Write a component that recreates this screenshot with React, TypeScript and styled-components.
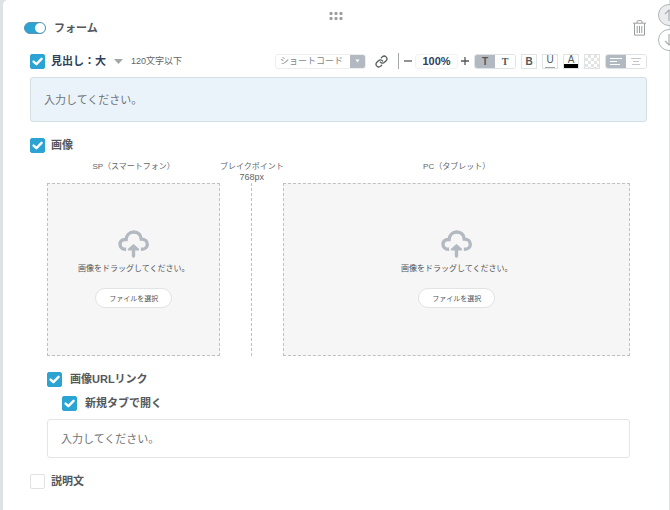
import React, { useId, useState } from "react";
import styled, { createGlobalStyle } from "styled-components";

const BLUE = "#2ba4d3";
const NAVY = "#2f405a";
const TEXT = "#555759";
const SOFT = "#626567";
const LINE = "#dfe3e5";
const GREY = "#b3b9c0";

const GlobalStyle = createGlobalStyle`
  *, *::before, *::after { box-sizing: border-box; }
  body { margin: 0; background: #dde2e4; }
  body, button, input, select {
    font-family: "Liberation Sans", "Noto Sans CJK JP", sans-serif;
    color: ${TEXT};
  }
  button, select { cursor: pointer; }
`;

const Page = styled.div`
  overflow-x: clip;
  padding: 0 1px 0 3px;
`;

const Card = styled.main`
  position: relative;
  min-height: 100vh;
  padding: 12px 22px 20px 21px;
  background: #fff;
  border-radius: 5px 0 0 0;
`;

const DragHandle = styled.button`
  display: block;
  margin: 0 auto;
  padding: 0;
  border: 0;
  background: none;
  cursor: grab;
  svg { display: block; }
`;

const Header = styled.header`
  display: flex;
  align-items: center;
  justify-content: space-between;
  height: 16px;
`;

const SwitchLabel = styled.label`
  display: flex;
  align-items: center;
  gap: 8px;
  font-size: 11px;
  line-height: 16px;
  font-weight: 600;
`;

const Switch = styled.input`
  appearance: none;
  display: flex;
  align-items: center;
  width: 22px;
  height: 12px;
  margin: 0;
  border: 1px solid #5b93ab;
  border-radius: 6px;
  background: #c6cbce;
  &::before {
    content: "";
    width: 10px;
    height: 10px;
    border-radius: 50%;
    background: #fff;
  }
  &:checked { justify-content: flex-end; background: ${BLUE}; }
`;

const IconButton = styled.button`
  display: grid;
  place-items: center;
  padding: 0;
  border: 0;
  background: none;
  svg { display: block; }
`;

const MoveButtons = styled.div`
  position: absolute;
  top: 4px;
  right: -11px;
  display: grid;
  gap: 3px;
`;

const MoveButton = styled(IconButton)<{ $filled?: boolean }>`
  width: 22px;
  height: 22px;
  border: 1px solid #b2b6b9;
  border-radius: 50%;
  background: ${(p) => (p.$filled ? "#ebecee" : "#fff")};
`;

const Section = styled.section<{ $top: number }>`
  margin-top: ${(p) => p.$top}px;
  padding-left: 6px;
`;

const HeadingRow = styled.div`
  display: flex;
  align-items: center;
  height: 16px;
`;

const Box = styled.span`
  display: grid;
  width: 15px;
  height: 15px;
  flex: none;
  svg { grid-area: 1 / 1; pointer-events: none; }
`;

const BoxInput = styled.input`
  appearance: none;
  grid-area: 1 / 1;
  width: 15px;
  height: 15px;
  margin: 0;
  border: 1px solid ${LINE};
  border-radius: 2px;
  background: #fff;
  &:checked { border-color: ${BLUE}; background: ${BLUE}; }
`;

const CheckLabel = styled.label<{ $gap: number }>`
  display: flex;
  width: fit-content;
  align-items: center;
  gap: ${(p) => p.$gap}px;
  font-size: 11px;
  line-height: 15px;
  font-weight: 600;
`;

const LevelPicker = styled.span`
  display: flex;
  align-items: center;
  margin-left: 6px;
`;

const LevelSelect = styled.select`
  appearance: none;
  margin-right: -9px;
  padding: 0 17px 0 0;
  border: 0;
  background: none;
  color: ${NAVY};
  font-size: 11px;
  line-height: 16px;
  font-weight: 600;
`;

const Caret = styled.svg`
  flex: none;
  pointer-events: none;
`;

const Hint = styled.span`
  margin-left: 8px;
  color: ${SOFT};
  font-size: 9px;
  line-height: 16px;
  white-space: nowrap;
`;

const Toolbar = styled.div`
  display: flex;
  align-items: center;
  gap: 5px;
  margin-left: auto;
`;

const CodePicker = styled.span`
  display: flex;
  align-items: center;
  height: 15px;
  border: 1px solid #eceeef;
  border-radius: 3px;
  overflow: hidden;
`;

const CodeSelect = styled.select`
  appearance: none;
  width: 89px;
  height: 15px;
  margin-right: -15px;
  padding: 0 15px 0 4px;
  border: 0;
  background: none;
  color: #84888c;
  font-size: 9px;
  line-height: 13px;
`;

const CodeArrow = styled.span`
  display: grid;
  place-items: center;
  width: 15px;
  height: 15px;
  background: ${GREY};
  pointer-events: none;
`;

const LinkButton = styled(IconButton)`
  margin: 0 5px 0 4px;
`;

const Divider = styled.span`
  width: 1px;
  height: 16px;
  background: #a4a7aa;
`;

const Zoom = styled.div`
  display: flex;
  align-items: center;
  gap: 3px;
`;

const ZoomInput = styled.input`
  width: 43px;
  height: 15px;
  padding: 0;
  border: 1px solid #f1f2f3;
  border-radius: 3px;
  color: ${NAVY};
  font-size: 11px;
  font-weight: 600;
  text-align: center;
`;

const Segments = styled.div`
  display: flex;
  height: 15px;
  border: 1px solid ${LINE};
  border-radius: 3px;
  overflow: hidden;
`;

const Segment = styled(IconButton)<{ $on?: boolean; $serif?: boolean }>`
  width: 20px;
  background: ${(p) => (p.$on ? GREY : "#fff")};
  font-size: 10px;
  line-height: 13px;
  font-weight: 600;
  font-family: ${(p) => (p.$serif ? '"Liberation Serif", serif' : '"Liberation Sans", sans-serif')};
`;

const Tool = styled(IconButton)`
  width: 16px;
  height: 15px;
  border: 1px solid ${LINE};
  font-size: 10px;
  line-height: 13px;
  font-weight: 600;
`;

const BarTool = styled(Tool)<{ $bar: string; $thick: number }>`
  align-content: space-between;
  font-weight: 400;
  line-height: 9px;
  &::after {
    content: "";
    width: ${(p) => (p.$thick > 1 ? 14 : 10)}px;
    height: ${(p) => p.$thick}px;
    background: ${(p) => p.$bar};
  }
`;

const TextField = styled.input<{ $tinted?: boolean }>`
  display: block;
  width: 100%;
  height: ${(p) => (p.$tinted ? 45 : 39)}px;
  margin-top: 8px;
  padding: 0 13px;
  border: 1px solid ${(p) => (p.$tinted ? "#d3dfe3" : "#e3e5e6")};
  border-radius: 3px;
  background: ${(p) => (p.$tinted ? "#eaf3fa" : "#fff")};
  font-size: 11px;
  &::placeholder { color: #6f7478; opacity: 1; }
`;

const ImageBody = styled.div`
  padding: 8px 17px 0;
`;

const Columns = styled.div`
  display: grid;
  grid-template-columns: 1fr 63px 2fr;
  grid-template-rows: 22px 173px;
  justify-items: center;
`;

const ColumnTitle = styled.div`
  color: ${SOFT};
  font-size: 8px;
  line-height: 11px;
  text-align: center;
  white-space: nowrap;
`;

const Width = styled.div`
  font-size: 9px;
`;

const DropZone = styled.div`
  display: flex;
  flex-direction: column;
  align-items: center;
  justify-self: stretch;
  padding-top: 46px;
  border: 1px dashed #bfc1c3;
  background: #f6f6f6;
`;

const BreakLine = styled.div`
  border-left: 1px dashed #bfc1c3;
`;

const DropText = styled.p`
  margin: 5px 0 13px;
  font-size: 8px;
  line-height: 12px;
`;

const FileButton = styled.button`
  width: 77px;
  height: 20px;
  padding: 0;
  border: 1px solid #e1e3e4;
  border-radius: 10px;
  background: #fff;
  font-size: 7px;
`;

const LinkOptions = styled.div`
  display: grid;
  gap: 9px;
  margin-top: 16px;
`;

const Indent = styled.div`
  padding-left: 15px;
`;

function CheckBox({ id, label, on }: { id?: string; label?: string; on?: boolean }) {
  const [checked, setChecked] = useState(Boolean(on));
  return (
    <Box>
      <BoxInput
        type="checkbox"
        id={id}
        aria-label={label}
        checked={checked}
        onChange={(e) => setChecked(e.target.checked)}
      />
      {checked && (
        <svg width="15" height="15" viewBox="0 0 15 15" fill="none" stroke="#fff" strokeWidth="2.4" strokeLinecap="round" strokeLinejoin="round">
          <path d="M3.6 7.6 6.4 10.2 11.6 4.8" />
        </svg>
      )}
    </Box>
  );
}

function CheckRow({ text, on, gap = 8 }: { text: string; on?: boolean; gap?: number }) {
  const id = useId();
  return (
    <CheckLabel htmlFor={id} $gap={gap}>
      <CheckBox id={id} on={on} />
      {text}
    </CheckLabel>
  );
}

function UploadArea() {
  return (
    <DropZone>
      <svg width="31" height="28" viewBox="0 0 92 83" fill="none" stroke={GREY} strokeWidth="10">
        <path d="M24 57h-2C12 57 6 50 6 42s6-14 15-14h3C25 15 34 6 47 6s21 9 22 21c11 0 18 6 18 15s-7 15-16 15h-3" />
        <path d="M46 52v25" strokeLinecap="round" />
        <path d="M46 45 32 58h28z" fill={GREY} strokeWidth="6" strokeLinejoin="round" />
      </svg>
      <DropText>画像をドラッグしてください。</DropText>
      <FileButton type="button">ファイルを選択</FileButton>
    </DropZone>
  );
}

function Arrow({ down }: { down?: boolean }) {
  return (
    <svg width="12" height="14" viewBox="0 0 12 14" fill="none" stroke="#a9adb0" strokeWidth="1.2">
      <path d={down ? "M6 1v11M2 8l4 4 4-4" : "M6 13V2M2 6l4-4 4 4"} />
    </svg>
  );
}

export default function App() {
  return (
    <>
      <GlobalStyle />
      <Page>
        <Card>
          <DragHandle type="button" aria-label="並べ替え">
            <svg width="14" height="8" viewBox="0 0 14 8" fill="#9b9b9b">
              {[0, 5, 10].map((x) =>
                [0, 5].map((y) => <rect key={`${x}-${y}`} x={x + 0.5} y={y} width="3" height="3" rx="1" />)
              )}
            </svg>
          </DragHandle>
          <MoveButtons>
            <MoveButton type="button" aria-label="上へ移動" $filled><Arrow /></MoveButton>
            <MoveButton type="button" aria-label="下へ移動"><Arrow down /></MoveButton>
          </MoveButtons>

          <Header>
            <SwitchLabel>
              <Switch type="checkbox" role="switch" defaultChecked />
              フォーム
            </SwitchLabel>
            <IconButton type="button" aria-label="削除">
              <svg width="15" height="16" viewBox="0 0 15 16" fill="none" stroke="#9a9da0">
                <path d="M1 3.2h13M5 3V1.8Q5 .6 6.2.6h2.6Q10 .6 10 1.8V3M2.5 3.5v11.6h10V3.5M5.2 6v7M7.5 6v7M9.8 6v7" />
              </svg>
            </IconButton>
          </Header>

          <Section $top={17}>
            <HeadingRow>
              <CheckBox label="見出し" on />
              <LevelPicker>
                <LevelSelect aria-label="見出しの大きさ" defaultValue="大">
                  <option value="大">見出し：大</option>
                  <option value="中">見出し：中</option>
                  <option value="小">見出し：小</option>
                </LevelSelect>
                <Caret width="9" height="5" viewBox="0 0 9 5"><path d="M0 0h9L4.5 5z" fill="#a3a6a8" /></Caret>
              </LevelPicker>
              <Hint>120文字以下</Hint>
              <Toolbar role="toolbar">
                <CodePicker>
                  <CodeSelect aria-label="ショートコード">
                    <option>ショートコード</option>
                  </CodeSelect>
                  <CodeArrow>
                    <svg width="5" height="4" viewBox="0 0 5 4"><path d="M.5.5h4l-2 3z" fill="#fff" /></svg>
                  </CodeArrow>
                </CodePicker>
                <LinkButton type="button" aria-label="リンク">
                  <svg width="13" height="13" viewBox="0 0 24 24" fill="none" stroke="#595c5f" strokeWidth="2.4" strokeLinecap="round">
                    <path d="M10 13a5 5 0 0 0 7.54.54l3-3a5 5 0 0 0-7.07-7.07l-1.72 1.71" />
                    <path d="M14 11a5 5 0 0 0-7.54-.54l-3 3a5 5 0 0 0 7.07 7.07l1.71-1.71" />
                  </svg>
                </LinkButton>
                <Divider />
                <Zoom>
                  <IconButton type="button" aria-label="縮小">
                    <svg width="8" height="8" viewBox="0 0 8 8" stroke="#55585b" strokeWidth="1.3"><path d="M0 4h8" /></svg>
                  </IconButton>
                  <ZoomInput aria-label="文字の倍率" defaultValue="100%" />
                  <IconButton type="button" aria-label="拡大">
                    <svg width="8" height="8" viewBox="0 0 8 8" stroke="#55585b" strokeWidth="1.3"><path d="M0 4h8M4 0v8" /></svg>
                  </IconButton>
                </Zoom>
                <Segments>
                  <Segment type="button" aria-label="ゴシック体" $on>T</Segment>
                  <Segment type="button" aria-label="明朝体" $serif>T</Segment>
                </Segments>
                <Tool type="button" aria-label="太字">B</Tool>
                <BarTool type="button" aria-label="下線" $bar="#a4a7aa" $thick={1}>U</BarTool>
                <BarTool type="button" aria-label="文字色" $bar="#000" $thick={4}>A</BarTool>
                <Tool type="button" aria-label="背景色">
                  <svg width="14" height="13" viewBox="0 0 14 13" fill="#e4e4e4">
                    {[0, 1, 2, 3, 4].map((r) =>
                      [0, 1, 2, 3, 4].map((c) =>
                        (r + c) % 2 ? <rect key={`${r}-${c}`} x={c * 3} y={r * 3} width="3" height="3" /> : null
                      )
                    )}
                  </svg>
                </Tool>
                <Segments>
                  <Segment type="button" aria-label="左揃え" $on>
                    <svg width="12" height="9" viewBox="0 0 12 9" stroke="#fff"><path d="M0 1.5h12M0 4.5h7M0 7.5h10" /></svg>
                  </Segment>
                  <Segment type="button" aria-label="中央揃え">
                    <svg width="10" height="9" viewBox="0 0 10 9" stroke="#c5c8ca"><path d="M0 1.5h10M2 4.5h6M1 7.5h8" /></svg>
                  </Segment>
                </Segments>
              </Toolbar>
            </HeadingRow>
            <TextField aria-label="見出し" placeholder="入力してください。" $tinted />
          </Section>

          <Section $top={16}>
            <CheckRow text="画像" on gap={6} />
            <ImageBody>
              <Columns>
                <ColumnTitle>SP（スマートフォン）</ColumnTitle>
                <ColumnTitle>ブレイクポイント<Width>768px</Width></ColumnTitle>
                <ColumnTitle>PC（タブレット）</ColumnTitle>
                <UploadArea />
                <BreakLine />
                <UploadArea />
              </Columns>
              <LinkOptions>
                <CheckRow text="画像URLリンク" on />
                <Indent><CheckRow text="新規タブで開く" on /></Indent>
              </LinkOptions>
              <TextField aria-label="画像URLリンク" placeholder="入力してください。" />
            </ImageBody>
          </Section>

          <Section $top={16}>
            <CheckRow text="説明文" gap={6} />
          </Section>
        </Card>
      </Page>
    </>
  );
}
